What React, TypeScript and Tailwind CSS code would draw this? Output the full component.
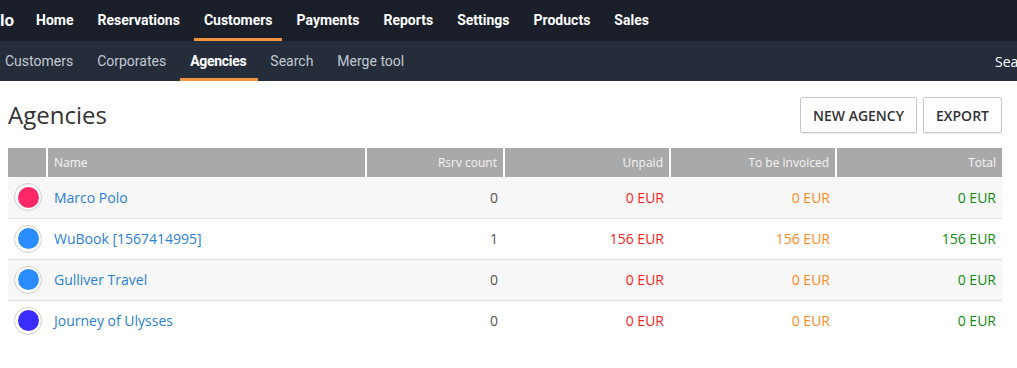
const topNav = ['Home', 'Reservations', 'Customers', 'Payments', 'Reports', 'Settings', 'Products', 'Sales'];
const subNav = ['Customers', 'Corporates', 'Agencies', 'Search', 'Merge tool'];

type Agency = { name: string; color: string; count: number; unpaid: number; invoice: number; total: number };

const agencies: Agency[] = [
  { name: 'Marco Polo', color: 'bg-[#fe2868]', count: 0, unpaid: 0, invoice: 0, total: 0 },
  { name: 'WuBook [1567414995]', color: 'bg-[#2b8cff]', count: 1, unpaid: 156, invoice: 156, total: 156 },
  { name: 'Gulliver Travel', color: 'bg-[#2b8cff]', count: 0, unpaid: 0, invoice: 0, total: 0 },
  { name: 'Journey of Ulysses', color: 'bg-[#3a2bff]', count: 0, unpaid: 0, invoice: 0, total: 0 },
];

export default function App() {
  return (
    <div className="h-[368px] w-[1017px] overflow-hidden bg-white">
      <nav className="flex h-[41px] items-stretch bg-[#1a1f2a] font-['Roboto',sans-serif] text-[14px] font-bold text-white">
        <div className="flex w-[24px] items-center overflow-hidden">
          <span className="-ml-[3px] h-[16px] w-[3px] bg-[#f0923e]" />
          <span className="text-[17px]">lo</span>
        </div>
        {topNav.map((item) => (
          <div key={item} className="relative flex items-center px-3">
            {item}
            {item === 'Customers' && <span className="absolute bottom-0 left-[2px] right-[3px] h-[3px] bg-[#f0923e]" />}
          </div>
        ))}
      </nav>

      <nav className="flex h-[40px] items-stretch bg-[#252d3b] font-['Roboto',sans-serif] text-[14px] text-[#c3c9d3]">
        <div className="-ml-[7px] flex">
          {subNav.map((item) => (
            <div
              key={item}
              className={
                item === 'Agencies'
                  ? 'relative flex items-center px-3 font-bold tracking-[-0.3px] text-white'
                  : 'flex items-center px-3'
              }
            >
              {item}
              {item === 'Agencies' && <span className="absolute bottom-0 left-[2px] right-0 h-[3px] bg-[#f0923e]" />}
            </div>
          ))}
        </div>
        <div className="ml-auto flex w-[22px] items-center overflow-hidden whitespace-nowrap font-['Open_Sans',sans-serif] text-white">
          Sea
        </div>
      </nav>

      <div className="px-2 font-['Open_Sans',sans-serif]">
        <div className="flex items-start pt-4">
          <h1 className="pt-[3px] text-[24px] leading-[30px] text-[#333]">Agencies</h1>
          <div className="ml-auto mr-[7px] flex gap-[6px]">
            <button className="h-[36px] rounded-[2px] border border-[#c8c8c8] bg-white px-3 text-[14px] font-semibold text-[#333] shadow-[0_1px_1px_rgba(0,0,0,0.08)]">
              NEW AGENCY
            </button>
            <button className="h-[36px] rounded-[2px] border border-[#c8c8c8] bg-white px-3 text-[14px] font-semibold text-[#333] shadow-[0_1px_1px_rgba(0,0,0,0.08)]">
              EXPORT
            </button>
          </div>
        </div>

        <table className="mt-[15px] w-[994px] border-collapse text-[14px]">
          <thead>
            <tr className="h-[29px] bg-[#a9a9a9] text-[12px] font-normal text-[#f4f4f4]">
              <th className="w-[39px] border-r-2 border-white" />
              <th className="w-[319px] border-r-2 border-white px-[6px] text-left font-normal">Name</th>
              <th className="w-[138px] border-r-2 border-white px-[6px] text-right font-normal">Rsrv count</th>
              <th className="w-[166px] border-r-2 border-white px-[6px] text-right font-normal">Unpaid</th>
              <th className="w-[166px] border-r-2 border-white px-[6px] text-right font-normal">To be invoiced</th>
              <th className="px-[6px] text-right font-normal">Total</th>
            </tr>
          </thead>
          <tbody>
            {agencies.map((a, i) => (
              <tr key={a.name} className={`h-[41px] border-b border-[#e2e2e2] ${i % 2 === 0 ? 'bg-[#f7f7f7]' : 'bg-white'} ${i === 3 ? 'border-b-0' : ''}`}>
                <td className="pl-[6px]">
                  <div className="flex h-[28px] w-[28px] items-center justify-center rounded-full border border-[#d0d0d0] bg-white">
                    <div className={`h-[21px] w-[21px] rounded-full ${a.color}`} />
                  </div>
                </td>
                <td className="px-[7px] text-[#2a7fd6]">{a.name}</td>
                <td className="px-[6px] text-right text-[#555]">{a.count}</td>
                <td className="px-[6px] text-right text-[#ff1a1a]">{a.unpaid} EUR</td>
                <td className="px-[6px] text-right text-[#ff8a1c]">{a.invoice} EUR</td>
                <td className="px-[6px] text-right text-[#118a11]">{a.total} EUR</td>
              </tr>
            ))}
          </tbody>
        </table>
      </div>
    </div>
  );
}
